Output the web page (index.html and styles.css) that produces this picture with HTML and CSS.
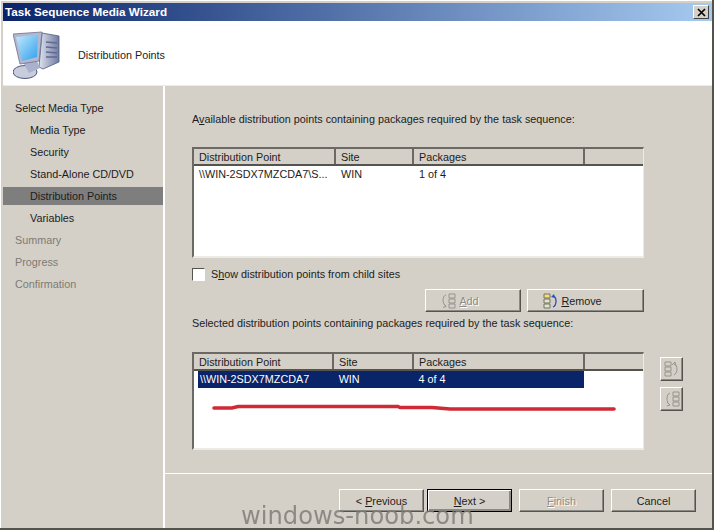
FILE: index.html
```html
<!DOCTYPE html>
<html lang="en">
<head>
<meta charset="utf-8">
<title>Task Sequence Media Wizard</title>
<link rel="stylesheet" href="styles.css">
</head>
<body>
<div class="window">
  <div class="titlebar">
    <span class="title">Task Sequence Media Wizard</span>
    <span class="close"><svg width="9" height="9" viewBox="0 0 9 9"><path d="M1 1l7 7M8 1l-7 7" stroke="#000" stroke-width="1.6" fill="none"/></svg></span>
  </div>
  <div class="header">
    <svg class="computer" width="50" height="50" viewBox="0 0 50 50">
      <defs>
        <linearGradient id="scr" x1="0" y1="0" x2="1" y2="1"><stop offset="0" stop-color="#c4e9fb"/><stop offset="1" stop-color="#2e9fee"/></linearGradient>
        <linearGradient id="cas" x1="0" y1="0" x2="1" y2="0"><stop offset="0" stop-color="#dfe3ee"/><stop offset="1" stop-color="#6f7aa0"/></linearGradient>
      </defs>
      <path d="M29 3l17 3v26l-16 7-4-2z" fill="url(#cas)" stroke="#4f5a80" stroke-width=".8"/>
      <path d="M33 12l11 1M33 17l11 1M33 22l11 1M33 27l11 0" stroke="#5f6a92" stroke-width="1.6"/>
      <ellipse cx="12" cy="42" rx="12" ry="6.500" fill="#c8ccdc" stroke="#4e5778"/>
      <path d="M10 32l14-1 3 7-11 5z" fill="#aab1cc"/>
      <path d="M0 4l29-2-3 29-19 3z" fill="#b3b8ce" stroke="#6a7290" stroke-width=".8"/>
      <path d="M3 7l22-2-1 22-15 4z" fill="url(#scr)"/>
    </svg>
    <span class="page-name">Distribution Points</span>
  </div>
  <div class="body">
    <nav class="sidebar">
      <div class="step">Select Media Type</div>
      <div class="step sub">Media Type</div>
      <div class="step sub">Security</div>
      <div class="step sub">Stand-Alone CD/DVD</div>
      <div class="step sub current">Distribution Points</div>
      <div class="step sub">Variables</div>
      <div class="step off">Summary</div>
      <div class="step off">Progress</div>
      <div class="step off">Confirmation</div>
    </nav>
    <main class="main">
      <div class="content">
        <p class="label first">A<u>v</u>ailable distribution points containing packages required by the task sequence:</p>
        <div class="list upper">
          <div class="cols">
            <span class="col c1">Distribution Point</span><span class="col c2">Site</span><span class="col c3">Packages</span><span class="col c4"></span>
          </div>
          <div class="row"><span class="cell c1">\\WIN-2SDX7MZCDA7\S...</span><span class="cell c2">WIN</span><span class="cell c3">1 of 4</span></div>
        </div>
        <label class="check"><span class="box"></span><span>S<u>h</u>ow distribution points from child sites</span></label>
        <div class="actions">
          <span class="btn add disabled">
            <svg width="17" height="16" viewBox="0 0 17 16"><path d="M5 2C1 3 1 11 5 13M3 11l2 2.500-3 1" fill="none" stroke="#98948c"/><path d="M8 1h6v4H8zM8 6h6v4H8zM8 11h6v4H8z" fill="none" stroke="#98948c"/></svg>
            <span><u>A</u>dd</span>
          </span>
          <span class="btn remove">
            <svg width="16" height="16" viewBox="0 0 16 16"><path d="M1 1h6v4H1z" fill="#f3df7a" stroke="#77735a"/><path d="M1 6h6v4H1zM1 11h6v4H1z" fill="#dfe3d6" stroke="#77735a"/><path d="M10 3c4 1 4 9 0 11" fill="none" stroke="#2b4fb8" stroke-width="1.300"/><path d="M8 4l3-3 1 4z" fill="#2b4fb8"/></svg>
            <span><u>R</u>emove</span>
          </span>
        </div>
        <p class="label second">Selected distribution points containing packages required by the task sequence:</p>
        <div class="lower-wrap">
          <div class="list lower">
            <div class="cols">
              <span class="col c1">Distribution Point</span><span class="col c2">Site</span><span class="col c3">Packages</span><span class="col c4"></span>
            </div>
            <div class="row selected"><span class="cell c1">\\WIN-2SDX7MZCDA7</span><span class="cell c2">WIN</span><span class="cell c3">4 of 4</span></div>
          </div>
          <div class="side-btns">
            <span class="btn square">
              <svg width="16" height="16" viewBox="0 0 16 16"><path d="M1 1h6v4H1zM1 6h6v4H1zM1 11h6v4H1z" fill="none" stroke="#98948c"/><path d="M10 3c4 1 4 9 0 11M8 4l3-3 1 4" fill="none" stroke="#98948c"/></svg>
            </span>
            <span class="btn square">
              <svg width="16" height="16" viewBox="0 0 16 16"><path d="M9 1h6v4H9zM9 6h6v4H9zM9 11h6v4H9z" fill="none" stroke="#98948c"/><path d="M6 2C2 3 2 12 6 14M3 11l3 3-3 1" fill="none" stroke="#98948c"/></svg>
            </span>
          </div>
        </div>
      </div>
      <div class="footer">
        <span class="btn nav prev"><span>&lt; <u>P</u>revious</span></span>
        <span class="btn nav default"><span><u>N</u>ext &gt;</span></span>
        <span class="btn nav disabled"><span><u>F</u>inish</span></span>
        <span class="btn nav">Cancel</span>
      </div>
    </main>
  </div>
  <svg class="scribble" width="404" height="10" viewBox="0 0 404 10"><path d="M2 5L20 5L26 3.500L186 3.500L188 4.500L220 4.500L238 6L402 6" fill="none" stroke="#cf2a35" stroke-width="3.600" stroke-linecap="round"/></svg>
  <div class="watermark">windows-noob.com</div>
</div>
</body>
</html>
```
FILE: styles.css
```css
* { box-sizing: border-box; }
html, body { margin: 0; padding: 0; }
body { width: 714px; height: 530px; overflow: hidden; background: #d4d0c8; }
.window {
  position: relative;
  width: 714px;
  height: 530px;
  display: flex;
  flex-direction: column;
  padding: 3px 0 0 3px;
  background: #d4d0c8;
  border-right: 2px solid #55534e;
  border-bottom: 2px solid #55534e;
  box-shadow: inset 1px 1px 0 #fff;
  font: 10.8px/14px "Liberation Sans", Arial, sans-serif;
  color: #1c1c1c;
}
.titlebar {
  flex: none;
  height: 18px;
  display: flex;
  align-items: center;
  justify-content: space-between;
  padding: 0 3px 0 2px;
  background: linear-gradient(90deg, #0a246a, #a6caf0);
}
.title { color: #fff; font-weight: bold; font-size: 11.7px; }
.close {
  width: 16px;
  height: 14px;
  display: flex;
  align-items: center;
  justify-content: center;
  background: #d4d0c8;
  border: 1px solid;
  border-color: #fff #404040 #404040 #fff;
}
.header {
  flex: none;
  height: 65px;
  display: flex;
  align-items: center;
  gap: 15px;
  padding: 0 0 0 10px;
  background: #fff;
  border-bottom: 1px solid #ecebe6;
}
.computer { flex: none; margin-top: 3px; }
.page-name { margin-top: 4px; }
.body { flex: 1; display: flex; min-height: 0; }
.sidebar {
  flex: none;
  width: 160px;
  padding: 13px 0 0;
}
.step { height: 18px; line-height: 18px; margin-bottom: 4px; padding-left: 12px; white-space: nowrap; }
.sub { padding-left: 27px; }
.current { background: #7e7e7e; }
.off { color: #7d7b74; }
.main {
  flex: 1;
  display: flex;
  flex-direction: column;
  min-width: 0;
  border-left: 2px solid #fff;
}
.content { flex: 1; padding: 26px 0 0 27px; min-height: 0; }
.label { margin: 0; height: 14px; white-space: nowrap; }
.list {
  width: 452px;
  background: #fff;
  border: 2px solid;
  border-color: #6b6964 #ecebe6 #ecebe6 #6b6964;
  border-right-width: 1px;
}
.upper { height: 111px; margin-top: 21px; }
.lower { height: 98px; }
.cols { display: flex; height: 17px; background: #d4d0c8; border-bottom: 2px solid #55534e; }
.col {
  height: 15px;
  line-height: 17px;
  padding-left: 5px;
  border-right: 2px solid #6b6964;
  white-space: nowrap;
  overflow: hidden;
}
.c1 { width: 142px; }
.c2 { width: 78px; }
.c3 { width: 171px; }
.c4 { flex: 1; border-right: 0; }
.lower .c1 { width: 140px; }
.lower .c2 { width: 80px; }
.row { display: flex; height: 17px; line-height: 17px; }
.cell { padding-left: 5px; white-space: nowrap; overflow: hidden; }
.selected { width: 386px; margin-left: 4px; background: #0a246a; color: #fff; }
.lower .selected .c1 { width: 136px; padding-left: 2px; }
.check { display: flex; align-items: center; gap: 6px; height: 14px; margin-top: 9px; }
.box {
  width: 13px;
  height: 13px;
  background: #fff;
  border: 1px solid;
  border-color: #55534e #fff #fff #55534e;
}
.actions { display: flex; justify-content: flex-end; gap: 6px; width: 452px; margin-top: 8px; }
.btn {
  display: flex;
  align-items: center;
  justify-content: center;
  background: #d4d0c8;
  border: 1px solid;
  border-color: #fff #55534e #55534e #fff;
  box-shadow: inset -1px -1px 0 #8c8a84;
}
.add { width: 96px; height: 23px; gap: 1px; padding-right: 26px; }
.remove { width: 117px; height: 23px; gap: 2px; padding-right: 26px; }
.disabled { color: #8f8c85; text-shadow: 1px 1px 0 #fff; }
.second { margin-top: 4px; }
.lower-wrap { display: flex; margin-top: 22px; }
.side-btns { display: flex; flex-direction: column; gap: 6px; margin: 5px 0 0 16px; }
.square { width: 23px; height: 24px; }
.footer {
  flex: none;
  height: 55px;
  display: flex;
  justify-content: flex-end;
  gap: 7px;
  padding: 15px 16px 0 0;
  border-top: 1px solid #fff;
}
.nav { width: 85px; height: 23px; }
.prev { margin-right: -4px; }
.default { border: 1px solid #000; box-shadow: inset 1px 1px 0 #fff, inset -2px -2px 0 #8c8a84; }
.scribble { position: absolute; left: 212px; top: 403px; }
.watermark {
  position: absolute;
  left: 241px;
  top: 500px;
  font: 24.2px/32px "DejaVu Sans", sans-serif;
  color: #7f7e79;
  opacity: .85;
  white-space: nowrap;
}
```
